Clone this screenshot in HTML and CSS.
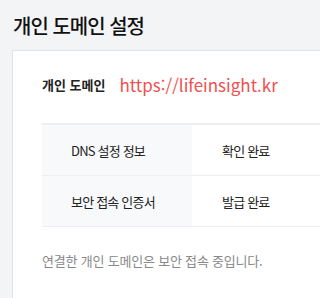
FILE: index.html
```html
<!DOCTYPE html>
<html lang="ko">
<head>
    <meta charset="UTF-8">
    <meta name="viewport" content="width=device-width, initial-scale=1.0">
    <title>개인 도메인 설정</title>
    <link rel="stylesheet" href="styles.css">
</head>
<body>
    <div class="page">
        <h1 class="page-title">개인 도메인 설정</h1>

        <div class="card">
            <div class="domain-row">
                <span class="domain-label">개인 도메인</span>
                <a class="domain-url" href="#">https://lifeinsight.kr</a>
            </div>

            <table class="status-table">
                <tr>
                    <th>DNS 설정 정보</th>
                    <td>확인 완료</td>
                </tr>
                <tr>
                    <th>보안 접속 인증서</th>
                    <td>발급 완료</td>
                </tr>
            </table>

            <p class="note">연결한 개인 도메인은 보안 접속 중입니다.</p>
        </div>
    </div>
</body>
</html>
```

FILE: styles.css
```css
body {
    margin: 0;
    background: #f3f4f6;
    font-family: 'Noto Sans CJK KR', 'Noto Sans', sans-serif;
    color: #222;
    overflow: hidden;
}

.page {
    padding: 14px 0 0 12px;
}

.page-title {
    margin: 0 0 12px 1px;
    font-size: 20px;
    font-weight: 500;
    line-height: 24px;
    letter-spacing: -1px;
    color: #111;
}

.card {
    background: #fff;
    border: 1px solid #dde1e8;
    border-right: none;
    padding: 20px 0 30px 29px;
    width: 400px;
}

.domain-row {
    display: flex;
    align-items: center;
    gap: 14px;
    height: 26px;
    margin-bottom: 26px;
}

.domain-label {
    font-size: 13px;
    font-weight: 700;
    color: #222;
}

.domain-url {
    font-size: 17px;
    color: #f0504f;
    text-decoration: none;
}

.status-table {
    width: 100%;
    border-collapse: collapse;
    border-top: 2px solid #eceef1;
    font-size: 13px;
    letter-spacing: -0.8px;
}

.status-table th,
.status-table td {
    height: 50px;
    padding: 0;
    border-bottom: 1px solid #eceef1;
    font-weight: 400;
    text-align: left;
    color: #222;
}

.status-table th {
    width: 121px;
    padding-left: 29px;
    background: #f8f9fb;
}

.status-table td {
    padding-left: 30px;
}

.note {
    margin: 24px 0 0;
    font-size: 13px;
    line-height: 19px;
    letter-spacing: -0.2px;
    color: #888;
}
```
